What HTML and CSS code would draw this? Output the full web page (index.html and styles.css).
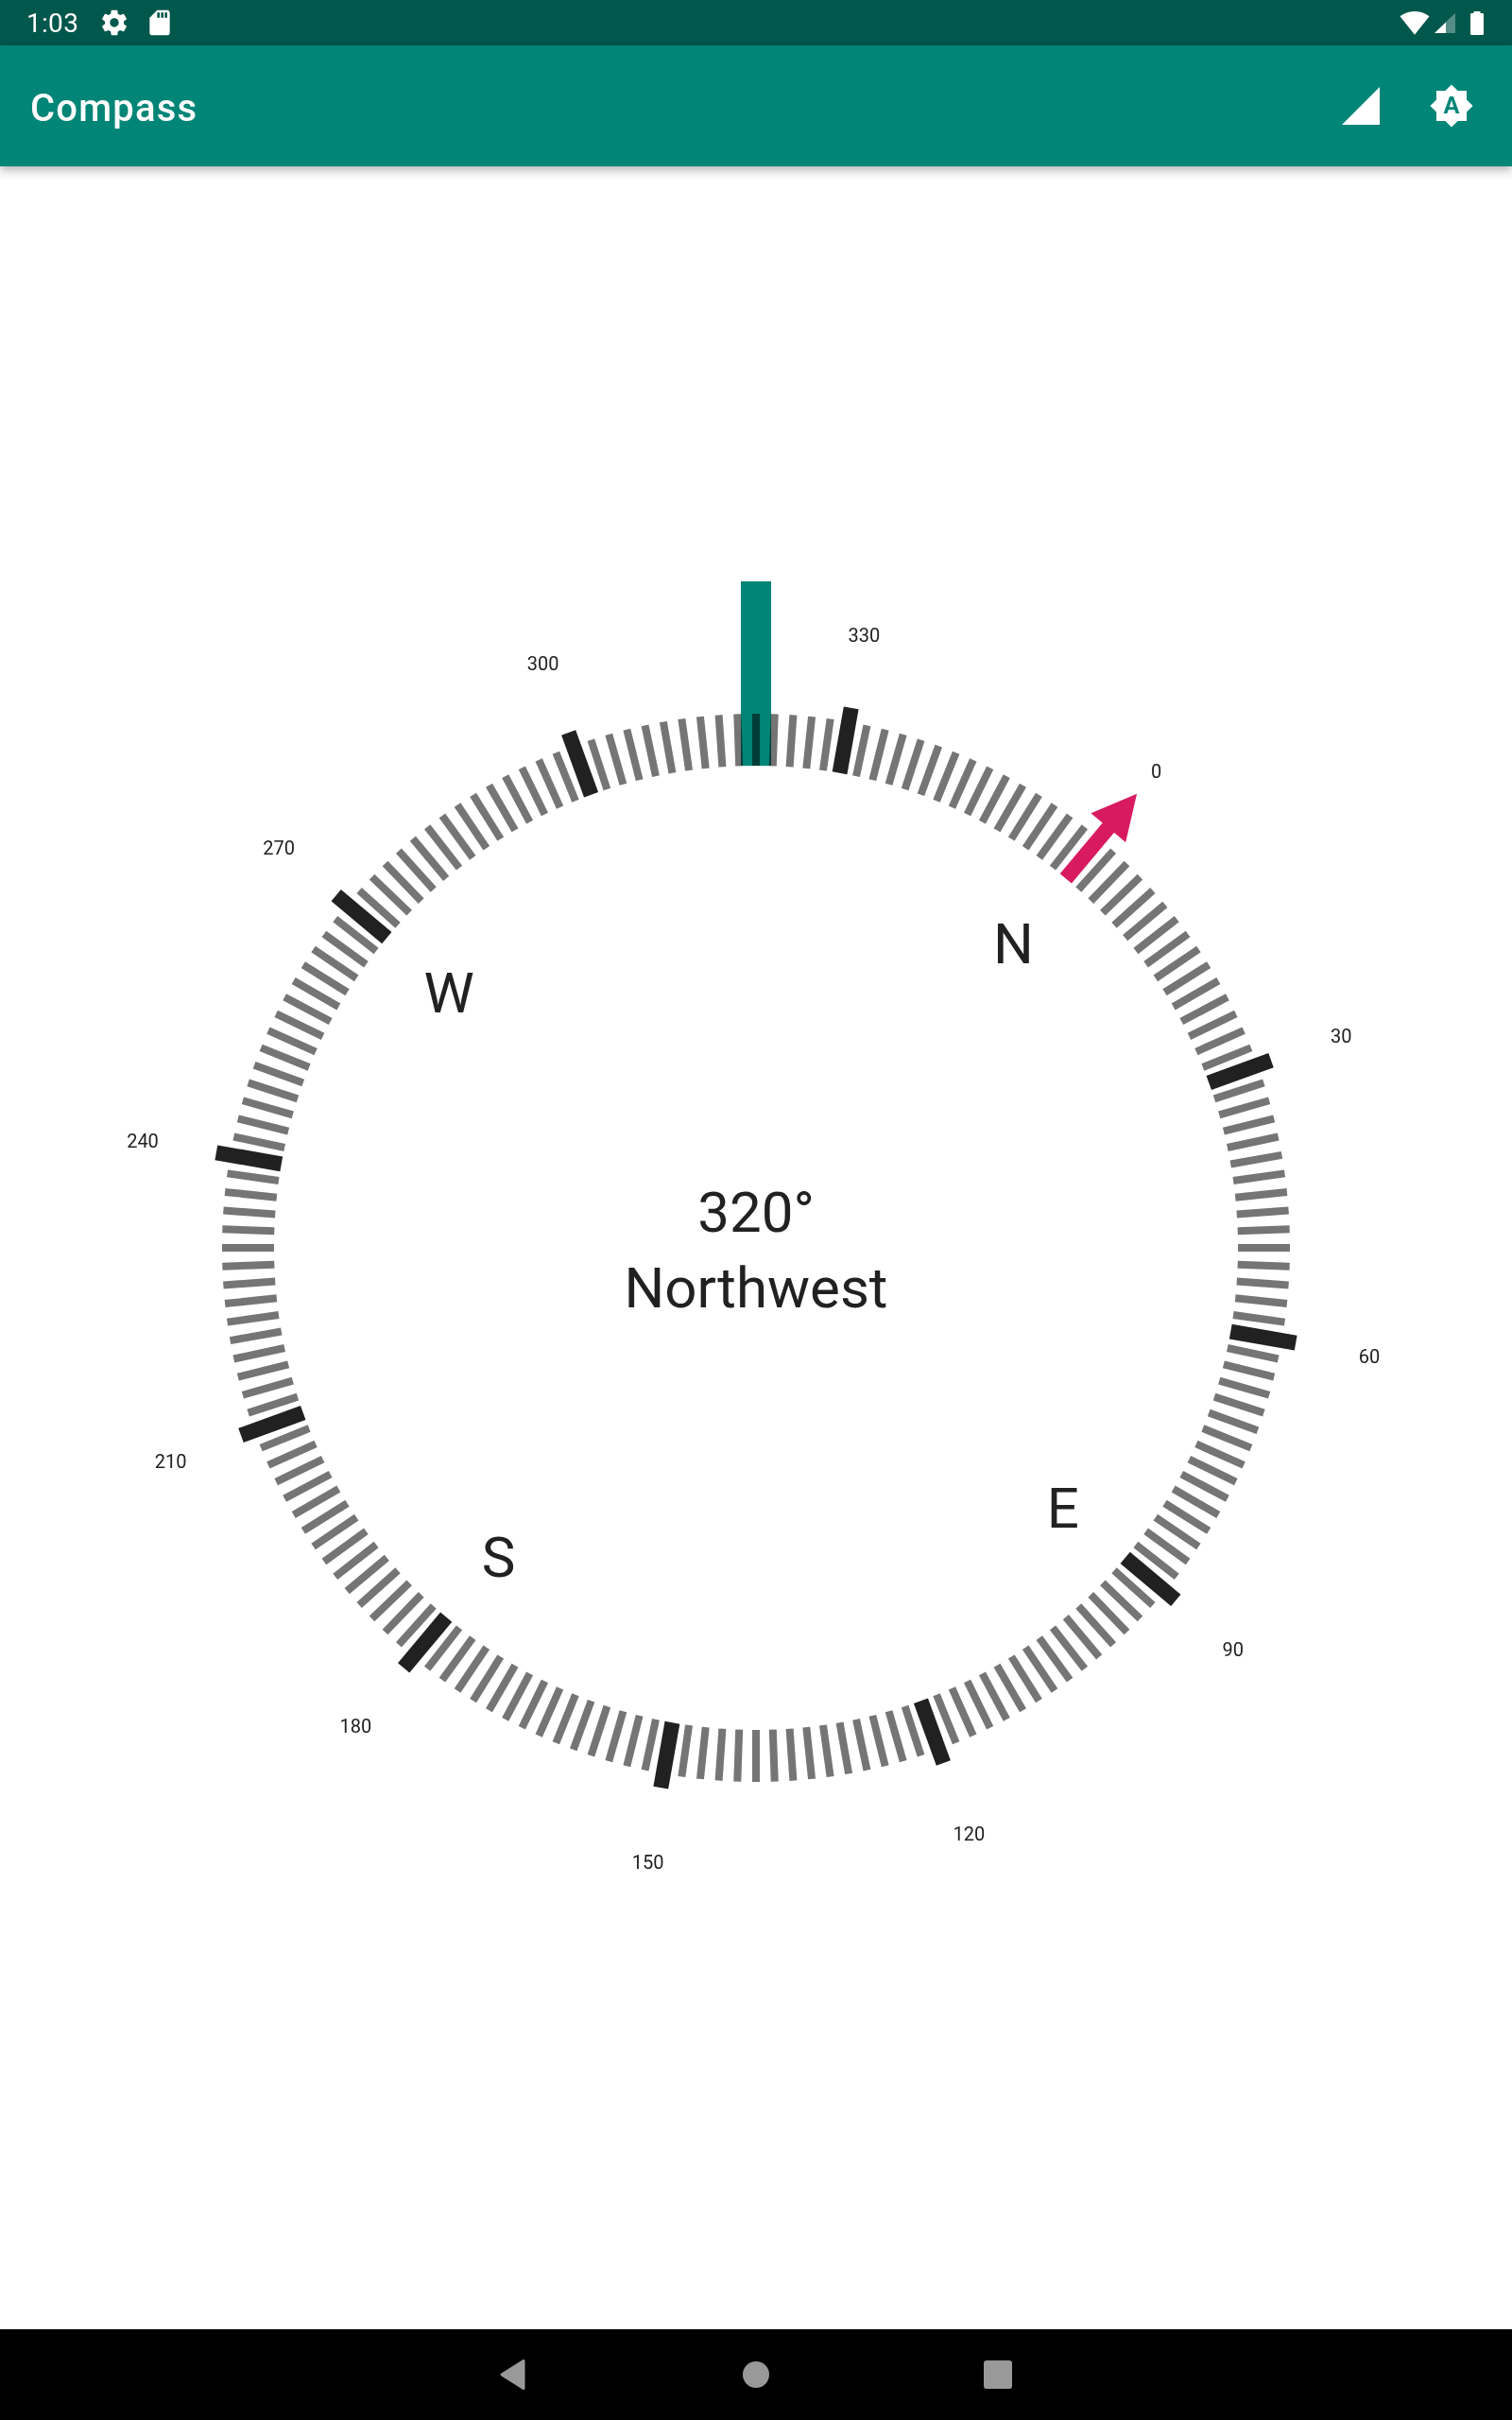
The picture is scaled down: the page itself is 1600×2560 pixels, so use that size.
FILE: index.html
```html
<!DOCTYPE html>
<html>
<head>
  <title>Compass</title>
  <link rel="stylesheet" href="styles.css">
</head>
<body>
  <div class="status-bar">
    <div class="status-left">
      <span class="clock">1:03</span>
      <svg class="status-icon gear" viewBox="0 0 24 24"><path d="M19.43 12.98c.04-.32.07-.64.07-.98s-.03-.66-.07-.98l2.11-1.65c.19-.15.24-.42.12-.64l-2-3.46c-.12-.22-.39-.3-.61-.22l-2.49 1c-.52-.4-1.08-.73-1.69-.98l-.38-2.65C14.46 2.18 14.25 2 14 2h-4c-.25 0-.46.18-.49.42l-.38 2.65c-.61.25-1.17.59-1.69.98l-2.49-1c-.23-.09-.49 0-.61.22l-2 3.46c-.13.22-.07.49.12.64l2.11 1.65c-.04.32-.07.65-.07.98s.03.66.07.98l-2.11 1.65c-.19.15-.24.42-.12.64l2 3.46c.12.22.39.3.61.22l2.49-1c.52.4 1.08.73 1.69.98l.38 2.65c.03.24.24.42.49.42h4c.25 0 .46-.18.49-.42l.38-2.65c.61-.25 1.17-.59 1.69-.98l2.49 1c.23.09.49 0 .61-.22l2-3.46c.12-.22.07-.49-.12-.64l-2.11-1.65zM12 15.5c-1.93 0-3.5-1.57-3.5-3.5s1.57-3.5 3.5-3.5 3.5 1.57 3.5 3.5-1.57 3.5-3.5 3.5z"/></svg>
      <svg class="status-icon sd" viewBox="0 0 24 24"><path d="M18 2h-8L4.02 8 4 20c0 1.1.9 2 2 2h12c1.1 0 2-.9 2-2V4c0-1.1-.9-2-2-2zm-6 6h-2V4h2v4zm3 0h-2V4h2v4zm3 0h-2V4h2v4z"/></svg>
    </div>
    <div class="status-right">
      <svg class="status-icon wifi" viewBox="0 0 24 24"><path d="M12.01 21.49L23.64 7c-.45-.34-4.93-4-11.64-4C5.28 3 .81 6.66.36 7l11.63 14.49.01.01.01-.01z"/></svg>
      <svg class="signal" viewBox="0 0 22 21"><path class="signal-empty" d="M12 21V9L22 0v21z"/><path d="M0 21L12 9.5V21z"/></svg>
      <svg class="battery" viewBox="0 0 14 25"><path d="M3.5 0h7v2H13a1 1 0 0 1 1 1v21a1 1 0 0 1-1 1H1a1 1 0 0 1-1-1V3a1 1 0 0 1 1-1h2.5z"/></svg>
    </div>
  </div>

  <header class="toolbar">
    <h1 class="title">Compass</h1>
    <div class="actions">
      <svg class="action-signal" viewBox="0 0 40 40"><path d="M0 40L40 0v40z"/></svg>
      <svg class="action-bright" viewBox="0 0 24 24"><path d="M10.85 12.65h2.3L12 9l-1.15 3.65zM20 8.69V4h-4.69L12 .69 8.69 4H4v4.69L.69 12 4 15.31V20h4.69L12 23.31 15.31 20H20v-4.69L23.31 12 20 8.69zM14.3 16l-.7-2h-3.2l-.7 2H7.8L11 7h2l3.2 9h-1.9z"/></svg>
    </div>
  </header>

  <main class="content">
    <svg id="dial" class="dial" viewBox="-800 -800 1600 1600">
      <g id="ticks"></g>
      <g id="labels"></g>
      <rect class="needle" x="-16" y="-705" width="32" height="195"/>
      <polygon class="arrow" transform="rotate(40)" points="-8,-510 -8,-580 -24,-580 0,-627 24,-580 8,-580 8,-510"/>
      <text class="reading" x="0" y="-17">320°</text>
      <text class="reading" x="0" y="63">Northwest</text>
    </svg>
  </main>

  <nav class="nav-bar">
    <svg class="nav-back" viewBox="0 0 27 32"><path d="M25 1.5v29L2 16z"/></svg>
    <span class="nav-home"></span>
    <span class="nav-recent"></span>
  </nav>

  <script src="script.js"></script>
</body>
</html>
```

FILE: styles.css
```css
html, body {
  margin: 0;
  padding: 0;
}

body {
  width: 1600px;
  height: 2560px;
  display: flex;
  flex-direction: column;
  background-color: #fff;
  font-family: Roboto, sans-serif;
  color: #212121;
  overflow: hidden;
}

.status-bar {
  height: 48px;
  flex: none;
  display: flex;
  justify-content: space-between;
  align-items: center;
  background-color: #00574b;
  fill: #fff;
  color: #fff;
}

.status-left, .status-right {
  display: flex;
  align-items: center;
}

.status-left {
  padding-left: 28px;
}

.status-right {
  padding-right: 30px;
}

.clock {
  font-size: 28px;
  letter-spacing: 0.3px;
  width: 77px;
}

.status-icon {
  width: 32px;
  height: 32px;
}

.sd {
  margin-left: 16px;
}

.wifi {
  margin-right: 5px;
}

.signal {
  width: 22px;
  height: 21px;
  margin-top: 1px;
  margin-right: 16px;
}

.signal-empty {
  opacity: 0.33;
}

.battery {
  width: 14px;
  height: 25px;
}

.toolbar {
  height: 128px;
  flex: none;
  display: flex;
  justify-content: space-between;
  align-items: center;
  background-color: #008577;
  box-shadow: 0 4px 10px rgba(0, 0, 0, 0.3);
  position: relative;
  z-index: 1;
  fill: #fff;
}

.title {
  margin: 4px 0 0 32px;
  font-size: 40px;
  font-weight: 500;
  letter-spacing: 1.2px;
  color: #fff;
}

.actions {
  display: flex;
  align-items: center;
  padding-right: 40px;
}

.action-signal {
  width: 40px;
  height: 40px;
  margin-right: 52px;
}

.action-bright {
  width: 48px;
  height: 48px;
}

.content {
  flex: 1;
  display: flex;
  justify-content: center;
  align-items: center;
  background-color: #fff;
}

.dial {
  width: 1600px;
  height: 1600px;
  display: block;
}

.tick {
  stroke: #757575;
  stroke-width: 8;
}

.tick-major {
  stroke: #212121;
  stroke-width: 16;
}

.needle {
  fill: #008577;
  mix-blend-mode: multiply;
}

.arrow {
  fill: #d81b60;
}

.degree {
  font-size: 20px;
  fill: #212121;
  text-anchor: middle;
  dominant-baseline: central;
}

.cardinal {
  font-size: 60px;
  fill: #212121;
  text-anchor: middle;
  dominant-baseline: central;
}

.reading {
  font-size: 60px;
  fill: #212121;
  text-anchor: middle;
}

.nav-bar {
  height: 96px;
  flex: none;
  display: flex;
  justify-content: center;
  align-items: center;
  background-color: #000;
}

.nav-back {
  width: 27px;
  height: 32px;
  fill: #999;
  stroke: #999;
  stroke-width: 3;
  stroke-linejoin: round;
}

.nav-home {
  width: 28px;
  height: 28px;
  margin: 0 227px 0 230px;
  border-radius: 50%;
  background-color: #999;
}

.nav-recent {
  width: 30px;
  height: 30px;
  border-radius: 3px;
  background-color: #999;
}
```

FILE: script.js
```js
const SVG_NS = 'http://www.w3.org/2000/svg';
const heading = 320;
const ticks = document.getElementById('ticks');
const labels = document.getElementById('labels');

function place(deg) {
  return deg - heading;
}

function polar(deg, r) {
  const a = place(deg) * Math.PI / 180;
  return [r * Math.sin(a), -r * Math.cos(a)];
}

// a tick every 2 degrees, a longer one every 30, the arrow takes the place of 0
for (let deg = 2; deg < 360; deg += 2) {
  const major = deg % 30 === 0;
  const line = document.createElementNS(SVG_NS, 'line');
  line.setAttribute('class', major ? 'tick tick-major' : 'tick');
  line.setAttribute('y1', -510);
  line.setAttribute('y2', major ? -580 : -565);
  line.setAttribute('transform', `rotate(${place(deg)})`);
  ticks.appendChild(line);
}

function addText(cls, deg, r, str, dy) {
  const [x, y] = polar(deg, r);
  const text = document.createElementNS(SVG_NS, 'text');
  text.setAttribute('class', cls);
  text.setAttribute('x', x.toFixed(1));
  text.setAttribute('y', (y + dy).toFixed(1));
  text.textContent = str;
  labels.appendChild(text);
}

for (let deg = 0; deg < 360; deg += 30) {
  addText('degree', deg, 659, String(deg), 1);
}

[['N', 0], ['E', 90], ['S', 180], ['W', 270]].forEach(([name, deg]) => {
  addText('cardinal', deg, 424, name, 3);
});
```
